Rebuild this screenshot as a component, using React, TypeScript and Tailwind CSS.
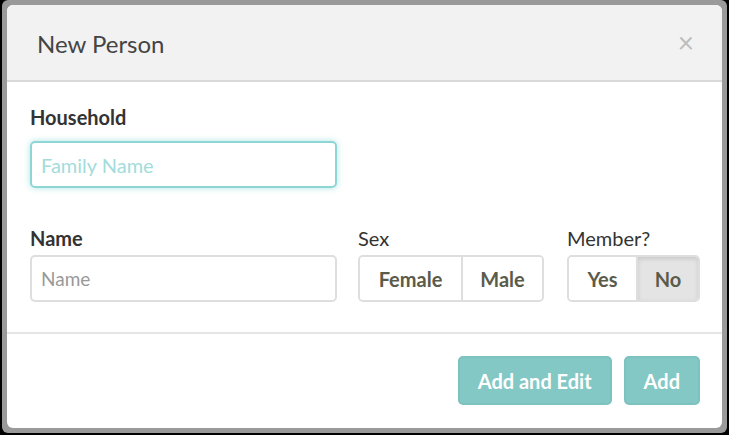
import { useState } from "react";

const font = { fontFamily: "Lato, 'Open Sans', sans-serif" };

function Segmented({ options, active, widths }: { options: string[]; active?: string; widths: string[] }) {
  return (
    <div className="flex h-[47px] rounded-[5px] border-2 border-[#dedede] overflow-hidden">
      {options.map((o, i) => (
        <button
          key={o}
          className={
            "text-[20px] font-bold text-[#5b5b4b] " +
            widths[i] +
            (i > 0 ? " border-l-2 border-[#dedede] " : " ") +
            (o === active ? "bg-[#e4e4e4] shadow-[inset_0_2px_4px_rgba(0,0,0,0.12)]" : "bg-white")
          }
        >
          {o}
        </button>
      ))}
    </div>
  );
}

export default function App() {
  const [household, setHousehold] = useState("");
  const [name, setName] = useState("");

  return (
    <div className="w-[729px] h-[435px] bg-black px-[2px] pb-[2px]" style={font}>
      <div className="h-full bg-[#9a9a9a] rounded-[6px] p-[5px]">
        <div className="h-full bg-white rounded-[6px] flex flex-col overflow-hidden">
          {/* header */}
          <div className="h-[77px] shrink-0 bg-[#f2f2f2] border-b-2 border-[#d9d9d9] flex items-center justify-between pl-[30px] pr-[28px]">
            <h2 className="text-[24px] text-[#444] mt-[2px]">New Person</h2>
            <span className="text-[28px] leading-none text-[#bdbdbd] mt-[-2px]">×</span>
          </div>

          {/* body */}
          <div className="pl-[23px] pr-[22px] pt-[22px] pb-[30px] border-b-2 border-[#e6e6e6]">
            <label className="block text-[20px] font-bold text-[#333] leading-[26px]">Household</label>
            <input
              autoFocus
              value={household}
              onChange={(e) => setHousehold(e.target.value)}
              placeholder="Family Name"
              className="mt-[11px] w-[307px] h-[47px] rounded-[5px] border-2 border-[#8ed6d6] shadow-[0_0_6px_rgba(120,210,210,0.6)] px-[9px] text-[20px] text-[#333] caret-[#333] placeholder:text-[#a3dcdc] outline-none"
            />

            <div className="mt-[37px] flex">
              <div className="w-[307px]">
                <label className="block text-[20px] font-bold text-[#333] leading-[26px]">Name</label>
                <input
                  value={name}
                  onChange={(e) => setName(e.target.value)}
                  placeholder="Name"
                  className="mt-[4px] w-full h-[47px] rounded-[5px] border-2 border-[#dedede] px-[9px] text-[19px] text-[#333] placeholder:text-[#999] outline-none"
                />
              </div>
              <div className="ml-[21px]">
                <label className="block text-[20px] text-[#333] leading-[26px]">Sex</label>
                <div className="mt-[4px]">
                  <Segmented options={["Female", "Male"]} widths={["w-[101px]", "w-[81px]"]} />
                </div>
              </div>
              <div className="ml-auto">
                <label className="block text-[20px] text-[#333] leading-[26px]">Member?</label>
                <div className="mt-[4px]">
                  <Segmented options={["Yes", "No"]} active="No" widths={["w-[67px]", "w-[62px]"]} />
                </div>
              </div>
            </div>
          </div>

          {/* footer */}
          <div className="flex justify-end gap-[12px] pl-[23px] pr-[22px] pt-[22px]">
            <button className="h-[49px] px-[18px] rounded-[5px] bg-[#84c8c5] border-2 border-[#7cc2bf] text-white text-[20px] font-bold">
              Add and Edit
            </button>
            <button className="h-[49px] px-[18px] rounded-[5px] bg-[#84c8c5] border-2 border-[#7cc2bf] text-white text-[20px] font-bold">
              Add
            </button>
          </div>
        </div>
      </div>
    </div>
  );
}
